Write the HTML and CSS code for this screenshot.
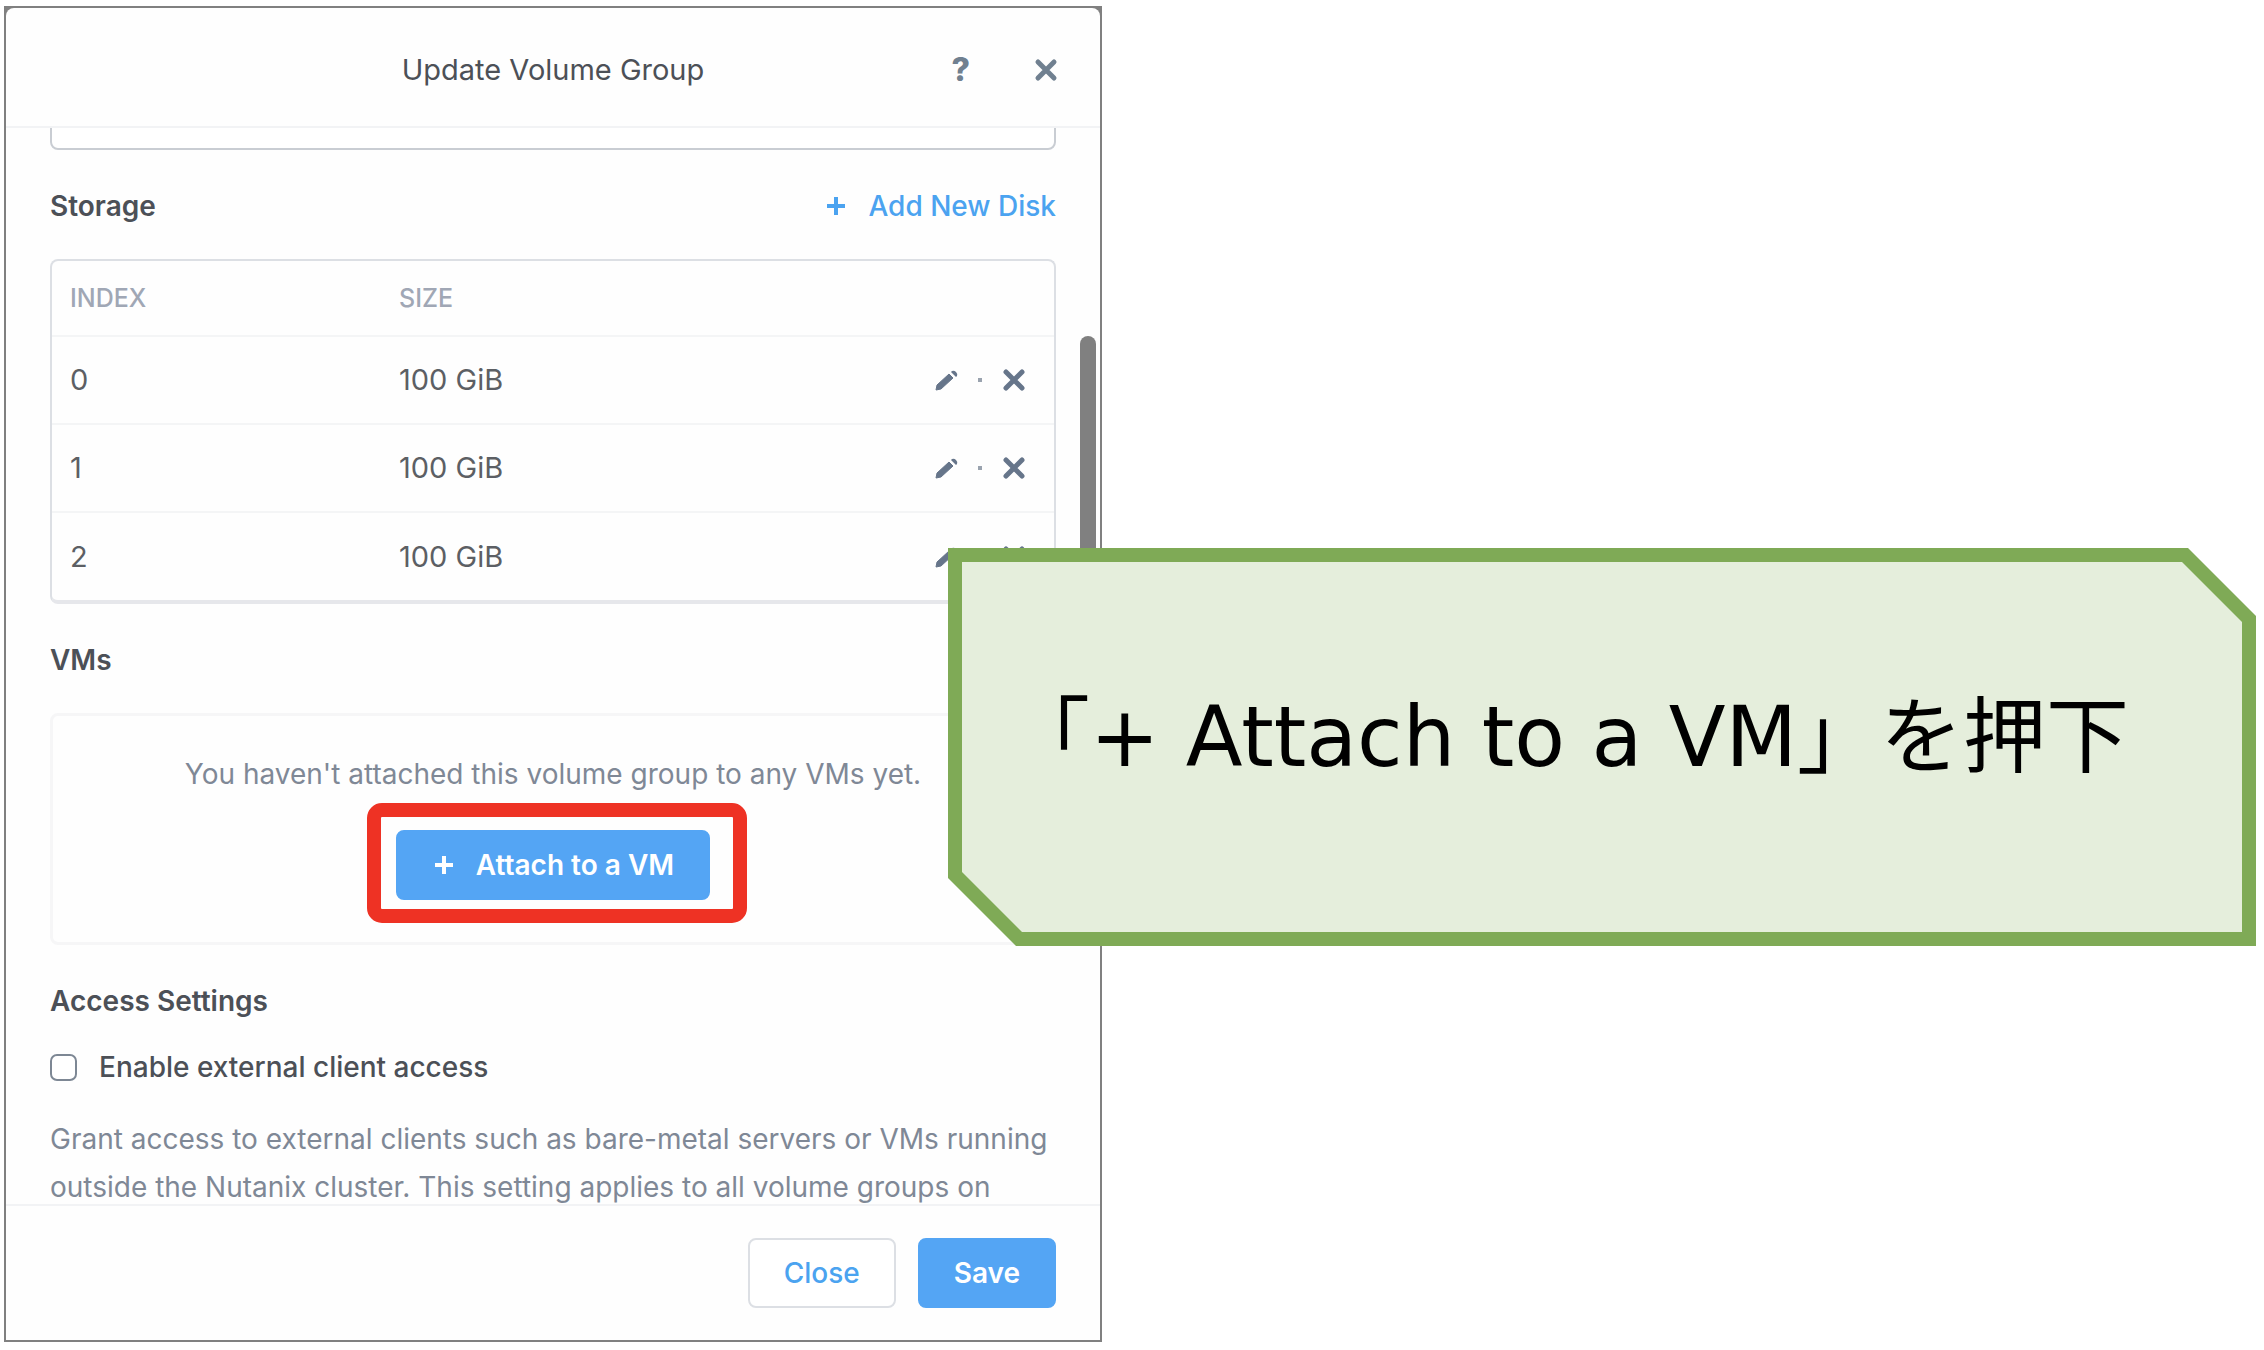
FILE: index.html
```html
<!DOCTYPE html>
<html lang="ja">
  <head>
    <meta charset="utf-8" />
    <meta name="viewport" content="width=device-width, initial-scale=1" />
    <title>Update Volume Group</title>
    <link rel="stylesheet" href="styles.css">
  </head>
  <body>
    <svg class="sprite" aria-hidden="true">
      <symbol id="icon-cross" viewBox="0 0 24 24">
        <path d="M4 4l16 16M20 4L4 20" fill="none" stroke="currentColor" stroke-width="5" stroke-linecap="round" />
      </symbol>
      <symbol id="icon-plus" viewBox="0 0 24 24">
        <path d="M12 3v18M3 12h18" fill="none" stroke="currentColor" stroke-width="4" />
      </symbol>
      <symbol id="icon-pencil" viewBox="0 0 24 24">
        <path d="M2 22l1-5L15 6l4 4L7 21z" fill="currentColor" stroke="currentColor" stroke-linejoin="round" />
        <path d="M17 4l1-1q2-1 4 1t1 4l-1 1z" fill="currentColor" />
      </symbol>
    </svg>

    <section class="dialog" role="dialog" aria-labelledby="dialog-title">
      <header class="dialog-header">
        <h1 id="dialog-title">Update Volume Group</h1>
        <div class="header-actions">
          <button class="icon-button help" type="button">?</button>
          <button class="icon-button" type="button" aria-label="Close dialog">
            <svg class="icon"><use href="#icon-cross" /></svg>
          </button>
        </div>
      </header>

      <div class="dialog-body">
        <input class="field" type="text" aria-label="Description" />

        <div class="section-header">
          <h2>Storage</h2>
          <button class="link-button" type="button">
            <svg class="icon"><use href="#icon-plus" /></svg>
            Add New Disk
          </button>
        </div>

        <div class="table-card">
          <table>
            <thead>
              <tr>
                <th class="col-index">Index</th>
                <th>Size</th>
                <th></th>
              </tr>
            </thead>
            <tbody>
              <tr>
                <td>0</td>
                <td>100 GiB</td>
                <td>
                  <div class="row-actions">
                    <button class="icon-button" type="button" aria-label="Edit disk 0"><svg class="icon"><use href="#icon-pencil" /></svg></button>
                    <span class="dot"></span>
                    <button class="icon-button" type="button" aria-label="Remove disk 0"><svg class="icon"><use href="#icon-cross" /></svg></button>
                  </div>
                </td>
              </tr>
              <tr>
                <td>1</td>
                <td>100 GiB</td>
                <td>
                  <div class="row-actions">
                    <button class="icon-button" type="button" aria-label="Edit disk 1"><svg class="icon"><use href="#icon-pencil" /></svg></button>
                    <span class="dot"></span>
                    <button class="icon-button" type="button" aria-label="Remove disk 1"><svg class="icon"><use href="#icon-cross" /></svg></button>
                  </div>
                </td>
              </tr>
              <tr>
                <td>2</td>
                <td>100 GiB</td>
                <td>
                  <div class="row-actions">
                    <button class="icon-button" type="button" aria-label="Edit disk 2"><svg class="icon"><use href="#icon-pencil" /></svg></button>
                    <span class="dot"></span>
                    <button class="icon-button" type="button" aria-label="Remove disk 2"><svg class="icon"><use href="#icon-cross" /></svg></button>
                  </div>
                </td>
              </tr>
            </tbody>
          </table>
        </div>

        <div class="section-header">
          <h2>VMs</h2>
        </div>

        <div class="empty-card">
          <p>You haven't attached this volume group to any VMs yet.</p>
          <div class="highlight">
            <button class="button button-primary" type="button">
              <svg class="icon"><use href="#icon-plus" /></svg>
              Attach to a VM
            </button>
          </div>
        </div>

        <div class="section-header section-header-compact">
          <h2>Access Settings</h2>
        </div>

        <label class="check">
          <input type="checkbox" />
          Enable external client access
        </label>
        <p class="hint">Grant access to external clients such as bare-metal servers or VMs running outside the Nutanix cluster. This setting applies to all volume groups on</p>
      </div>

      <footer class="dialog-footer">
        <button class="button" type="button">Close</button>
        <button class="button button-primary" type="button">Save</button>
      </footer>

      <div class="scrollbar"></div>
    </section>

    <aside class="callout">
      <p>「+ Attach to a VM」を押下</p>
    </aside>
  </body>
</html>
```

FILE: styles.css
```css
*,
*::before,
*::after {
  box-sizing: border-box;
  margin: 0;
}

body {
  background: #fff;
  color: #4c5057;
  font-family: Inter, sans-serif;
  font-size: 28px;
  line-height: 48px;
  overflow: hidden;
  padding: 6px 4px 8px;
  position: relative;
}

button,
input {
  color: inherit;
  font: inherit;
}

button {
  background: none;
  border: 0;
  padding: 0;
}

.sprite {
  display: none;
}

.icon {
  display: block;
  flex: none;
  height: 24px;
  width: 24px;
}

/* Dialog */
.dialog {
  background: #808080;
  border: 2px solid #808080;
  display: flex;
  flex-direction: column;
  height: calc(100vh - 14px);
  max-width: 1098px;
  position: relative;
}

.dialog-header {
  align-items: center;
  background: #fefefe;
  border-bottom: 2px solid #f2f3f5;
  border-radius: 8px 8px 0 0;
  display: grid;
  flex: none;
  grid-template-columns: 1fr auto 1fr;
  height: 120px;
  padding: 6px 42px 0 42px;
}

.dialog-header h1 {
  font-size: 29px;
  font-weight: 400;
  grid-column: 2;
}

.header-actions {
  align-items: center;
  color: #708090;
  display: flex;
  gap: 64px;
  justify-content: flex-end;
}

.icon-button {
  display: block;
}

.help {
  font-size: 32px;
  font-weight: 800;
}

.dialog-body {
  background: #fefefe;
  flex: 1;
  min-height: 0;
  overflow: hidden;
  padding: 0 44px;
}

.field {
  background: #fff;
  border: 2px solid #c9cdd3;
  border-radius: 8px;
  display: block;
  height: 72px;
  margin-top: -50px;
  width: 100%;
}

.section-header {
  align-items: center;
  display: flex;
  justify-content: space-between;
  padding: 32px 0 29px;
}

.section-header-compact {
  padding-bottom: 18px;
}

.section-header h2 {
  font-size: 28px;
  font-weight: 600;
}

.link-button {
  align-items: center;
  color: #4ba3f0;
  display: flex;
  font-weight: 500;
  gap: 20px;
}

.table-card {
  border: 2px solid #dcdfe4;
  border-bottom: 4px solid #e6e7eb;
  border-radius: 8px;
}

table {
  border-collapse: collapse;
  width: 100%;
}

th,
td {
  font-weight: 400;
  height: 88px;
  padding: 0 18px;
  text-align: left;
}

th {
  color: #a0a7b5;
  font-size: 25px;
  font-weight: 500;
  height: 75px;
  text-transform: uppercase;
}

tbody tr {
  border-top: 2px solid #f4f5f6;
}

.col-index {
  width: 329px;
}

td {
  color: #5c5f64;
  font-size: 29px;
}

.row-actions {
  align-items: center;
  color: #66758a;
  display: flex;
  gap: 20px;
  justify-content: flex-end;
  padding-right: 10px;
}

.dot {
  background: #9aa3af;
  height: 4px;
  width: 4px;
}

.empty-card {
  align-items: center;
  border: 3px solid #f6f6f7;
  border-radius: 8px;
  display: flex;
  flex-direction: column;
  gap: 32px;
  height: 232px;
  padding-top: 34px;
}

.empty-card p,
.hint {
  color: #7f8896;
}

.button {
  align-items: center;
  background: #fff;
  border: 2px solid #dcdfe4;
  border-radius: 8px;
  color: #4ba3f0;
  display: flex;
  font-weight: 500;
  gap: 20px;
  height: 70px;
  padding: 0 34px;
}

.button-primary {
  background: #54a5f4;
  border-color: #54a5f4;
  color: #fff;
  font-weight: 600;
}

.highlight {
  position: relative;
}

/* Red frame over the button to press */
.highlight::after {
  border: 14px solid #ee3224;
  border-radius: 15px;
  content: '';
  inset: -27px -37px -23px -29px;
  pointer-events: none;
  position: absolute;
}

.check {
  align-items: center;
  display: flex;
  font-weight: 500;
  gap: 22px;
}

.check input {
  appearance: none;
  background: #fff;
  border: 2px solid #7d8794;
  border-radius: 7px;
  height: 27px;
  width: 27px;
}

.hint {
  margin-top: 24px;
}

.dialog-footer {
  align-items: center;
  background: #fefefe;
  border-top: 2px solid #f2f3f5;
  display: flex;
  flex: none;
  gap: 22px;
  height: 136px;
  justify-content: flex-end;
  padding: 0 44px;
}

.scrollbar {
  background: #808080;
  border-radius: 8px;
  height: 400px;
  position: absolute;
  right: 4px;
  top: 328px;
  width: 16px;
}

/* Callout with two cut corners, the inner shape leaves a 14px outline */
.callout {
  align-items: center;
  background: #7faa56;
  clip-path: polygon(0 0, calc(100% - 68px) 0, 100% 68px, 100% 100%, 68px 100%, 0 calc(100% - 68px));
  color: #000;
  display: flex;
  font-family: "DejaVu Sans", "Noto Sans CJK JP", sans-serif;
  font-size: 83px;
  height: 398px;
  justify-content: center;
  left: 948px;
  line-height: 120px;
  padding: 0 68px 18px 0;
  position: absolute;
  right: 8px;
  top: 548px;
  white-space: nowrap;
}

.callout::before {
  background: #e5eedc;
  clip-path: polygon(0 0, calc(100% - 60px) 0, 100% 60px, 100% 100%, 60px 100%, 0 calc(100% - 60px));
  content: '';
  inset: 14px;
  position: absolute;
}

.callout p {
  position: relative;
}
```
